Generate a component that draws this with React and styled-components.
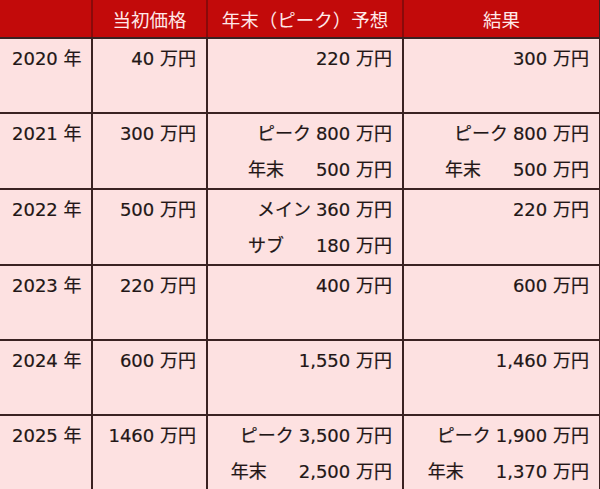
import React from 'react'
import styled, { createGlobalStyle } from 'styled-components'

const GlobalStyle = createGlobalStyle`
	html, body {
		margin: 0;
		padding: 0;
		background: #fde1e1;
	}
`

const Table = styled.table`
	width: 600px;
	height: 489px;
	border-collapse: collapse;
	table-layout: fixed;
	font-family: 'DejaVu Sans', 'Noto Sans CJK JP', sans-serif;
	font-size: 18px;
	color: #221616;
	background: #fde1e1;
	-webkit-text-stroke: 0.2px #221616;
`

const Col = styled.col`
	width: ${p => p.$w}px;
`

const HeadCell = styled.th`
	height: 37px;
	padding: 0;
	background: #c20a0a;
	color: #ffe8e8;
	-webkit-text-stroke: 0;
	font-weight: normal;
	font-size: 18.5px;
	text-align: center;
	vertical-align: middle;
	border-left: 2px solid #8a0a0a;
	border-bottom: 2px solid #3a2222;
	&:first-child {
		border-left: none;
	}
	&:last-child {
		border-right: 2px solid #3a2222;
	}
`

const Row = styled.tr`
	height: 75px;
	&:last-child td {
		border-bottom: 2px solid #3a2222;
	}
`

const Cell = styled.td`
	padding: 2px 10px 0 ${p => (p.$year ? 12 : 10)}px;
	vertical-align: top;
	line-height: 36px;
	white-space: nowrap;
	border-left: 2px solid #3a2222;
	border-top: 2px solid #3a2222;
	&:first-child {
		border-left: none;
	}
	&:last-child {
		border-right: 2px solid #3a2222;
	}
`

const Line = styled.div`
	display: flex;
	justify-content: ${p => (p.$left ? 'flex-start' : 'flex-end')};
	align-items: baseline;
	height: 36px;
`

const Label = styled.span`
	margin-right: ${p => (p.$short ? 32 : 5)}px;
`

const rows = [
	{ year: '2020 年', start: '40 万円', forecast: ['220 万円'], result: ['300 万円'] },
	{
		year: '2021 年',
		start: '300 万円',
		forecast: [['ピーク', '800 万円'], ['年末', '500 万円']],
		result: [['ピーク', '800 万円'], ['年末', '500 万円']],
	},
	{
		year: '2022 年',
		start: '500 万円',
		forecast: [['メイン', '360 万円'], ['サブ', '180 万円']],
		result: ['220 万円'],
	},
	{ year: '2023 年', start: '220 万円', forecast: ['400 万円'], result: ['600 万円'] },
	{ year: '2024 年', start: '600 万円', forecast: ['1,550 万円'], result: ['1,460 万円'] },
	{
		year: '2025 年',
		start: '1460 万円',
		forecast: [['ピーク', '3,500 万円'], ['年末', '2,500 万円']],
		result: [['ピーク', '1,900 万円'], ['年末', '1,370 万円']],
	},
]

function renderLines(lines) {
	return lines.map((line, i) => {
		if (typeof line === 'string') {
			return <Line key={i}>{line}</Line>
		}
		return (
			<Line key={i}>
				<Label $short={line[0].length < 3}>{line[0]}</Label>
				<span>{line[1]}</span>
			</Line>
		)
	})
}

const App = () => {
	return (
		<>
			<GlobalStyle />
			<Table>
				<colgroup>
					<Col $w={92} />
					<Col $w={115} />
					<Col $w={196} />
					<Col $w={197} />
				</colgroup>
				<thead>
					<tr>
						<HeadCell></HeadCell>
						<HeadCell>当初価格</HeadCell>
						<HeadCell>年末（ピーク）予想</HeadCell>
						<HeadCell>結果</HeadCell>
					</tr>
				</thead>
				<tbody>
					{rows.map(r => (
						<Row key={r.year}>
							<Cell $year>
								<Line $left>{r.year}</Line>
							</Cell>
							<Cell>
								<Line>{r.start}</Line>
							</Cell>
							<Cell>{renderLines(r.forecast)}</Cell>
							<Cell>{renderLines(r.result)}</Cell>
						</Row>
					))}
				</tbody>
			</Table>
		</>
	)
}

export default App
